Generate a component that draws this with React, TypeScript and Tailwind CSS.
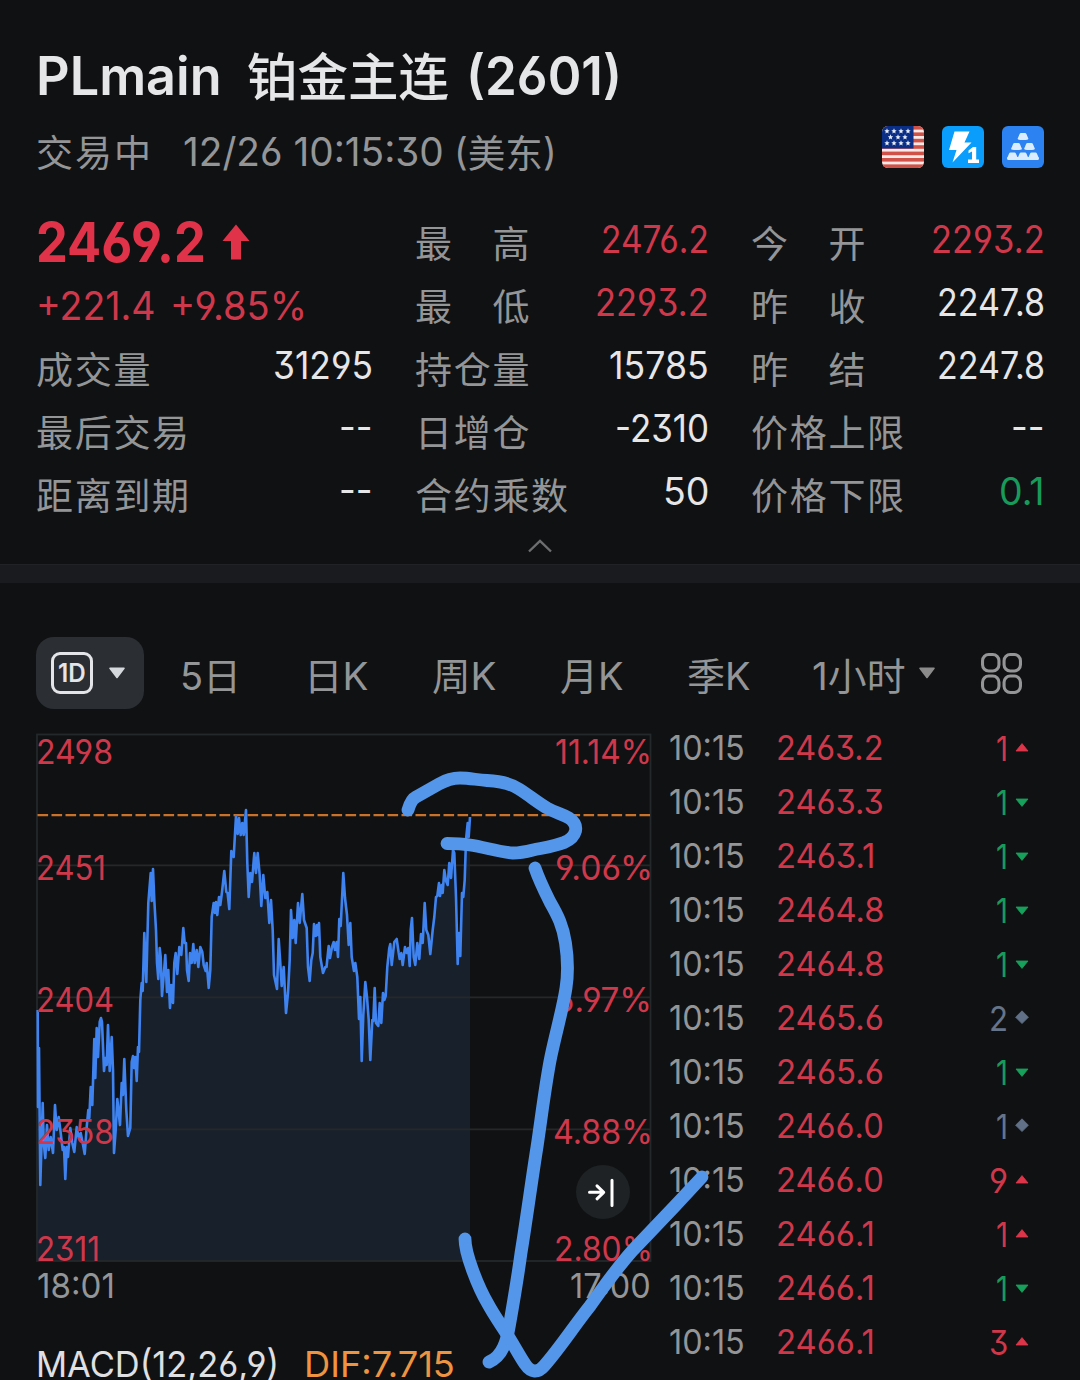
import { useLayoutEffect, useRef, useState } from 'react';
import type { ReactNode } from 'react';

// Condenses or widens a single line of text so that it fills `w` pixels
function Fit({ w, className = '', children }: { w: number; className?: string; children: ReactNode }) {
  const ref = useRef<HTMLSpanElement>(null);
  const [scale, setScale] = useState(1);

  useLayoutEffect(() => {
    if (ref.current) setScale(w / ref.current.offsetWidth);
  }, [w, children]);

  return (
    <span className={`block shrink-0 whitespace-pre ${className}`} style={{ width: w }}>
      <span ref={ref} className="inline-block origin-left" style={{ transform: `scaleX(${scale})` }}>
        {children}
      </span>
    </span>
  );
}

const tones = {
  red: 'text-[#cf384b]',
  green: 'text-[#189a5b]',
  white: 'text-[#e6e6e8]',
};
type Tone = keyof typeof tones;

type Stat = { label: string; value: string; w: number; tone: Tone };

const firstColumn: Stat[] = [
  { label: '成交量', value: '31295', w: 100, tone: 'white' },
  { label: '最后交易', value: '--', w: 34, tone: 'white' },
  { label: '距离到期', value: '--', w: 34, tone: 'white' },
];

const secondColumn: Stat[] = [
  { label: '最\u3000高', value: '2476.2', w: 108, tone: 'red' },
  { label: '最\u3000低', value: '2293.2', w: 114, tone: 'red' },
  { label: '持仓量', value: '15785', w: 100, tone: 'white' },
  { label: '日增仓', value: '-2310', w: 94, tone: 'white' },
  { label: '合约乘数', value: '50', w: 46, tone: 'white' },
];

const thirdColumn: Stat[] = [
  { label: '今\u3000开', value: '2293.2', w: 114, tone: 'red' },
  { label: '昨\u3000收', value: '2247.8', w: 108, tone: 'white' },
  { label: '昨\u3000结', value: '2247.8', w: 108, tone: 'white' },
  { label: '价格上限', value: '--', w: 34, tone: 'white' },
  { label: '价格下限', value: '0.1', w: 46, tone: 'green' },
];

const trades: { price: string; w: number; volume: string; dir: 'up' | 'down' | 'flat' }[] = [
  { price: '2463.2', w: 107, volume: '1', dir: 'up' },
  { price: '2463.3', w: 108, volume: '1', dir: 'down' },
  { price: '2463.1', w: 99, volume: '1', dir: 'down' },
  { price: '2464.8', w: 108, volume: '1', dir: 'down' },
  { price: '2464.8', w: 108, volume: '1', dir: 'down' },
  { price: '2465.6', w: 108, volume: '2', dir: 'flat' },
  { price: '2465.6', w: 108, volume: '1', dir: 'down' },
  { price: '2466.0', w: 108, volume: '1', dir: 'flat' },
  { price: '2466.0', w: 108, volume: '9', dir: 'up' },
  { price: '2466.1', w: 99, volume: '1', dir: 'up' },
  { price: '2466.1', w: 99, volume: '1', dir: 'down' },
  { price: '2466.1', w: 99, volume: '3', dir: 'up' },
];

const pricePoints =
  '37.7,1010 38,1107 39,1048 40.3,1185 42.7,1103 43.7,1143 45.3,1158 47,1125 48.7,1150 50.7,1137 53,1153 55,1105 56.7,1130 58.7,1117 60.7,1133 62.7,1150 64,1147 65.3,1179 66.7,1147 68,1157 70.3,1128 72.3,1143 74.3,1152 76.7,1127 78.7,1138 80.7,1133 82.7,1143 84.7,1154 86.7,1127 88.3,1110 89.3,1118 90.7,1087 92.3,1105 94.3,1039 95.3,1078 96.7,1028 98,1057 99.7,1022 101,1018 102,1022 104,1071 105.3,1058 106.7,1065 108,1025 109.7,1071 111.7,1037 113,1070 114,1153 115.7,1130 117.3,1099 120,1125 121.7,1083 123,1095 124.3,1059 126.3,1110 128,1136 130.3,1128 131.7,1062 133,1056 134,1068 135.3,1057 136.7,1081 138,1047 139,1052 140.3,1000 141.7,983 142.7,991 144.3,933 146.3,982 148.3,903 150.7,873 151.7,901 153,869 154.3,900 156,930 157,963 158.3,979 159.7,948 160.7,957 162,996 163.7,975 165.3,955 167,992 168.3,970 170,1008 171.3,985 173,1003 174.3,963 175.7,953 177.3,974 179.3,947 181.3,955 183.3,928 184.7,943 186,943 187,970 188.7,981 190,953 191.7,963 193.3,944 194.7,963 196.7,950 198.3,967 200.3,947 202.3,952 203.7,965 205.7,971 206.7,963 208.7,988 210.3,970 211.7,917 213.7,903 215,913 216,902 217.3,915 219,897 220.3,905 222,892 224.3,871 226.3,892 227.6,893 229.3,909 231.3,851 233.7,857 236,816 237.7,834 239,818 240.7,835 242.3,823 243.7,835 246,810 247.3,863 248.7,897 250.3,873 252,882 254.3,853 256,873 257.7,853 259.7,875 261.3,906 263.3,875 265.3,898 267.3,892 269.3,923 271,900 272.7,930 274,975 277,989 278.7,939 280.3,963 281.7,986 283.7,967 286,1013 288,993 289.7,960 291,910 292.7,938 294.3,920 295.7,943 298,903 299.7,923 302.3,894 304,920 306.7,928 308,967 309.7,981 311.3,960 312.7,953 314,924 315.7,936 317,925 318,935 319,923 320.3,957 323,973 325.3,967 326.5,967 328.7,946 330,958 332,947 333.7,942 335,950 336.7,942 338,957 339.3,919 340.7,926 343.3,873 345,898 347,915 348.7,945 350.3,923 351.7,957 354,971 355.3,963 357.3,977 359,1019 360.3,997 361.7,1061 363.3,1015 365.3,982 367,997 368.7,1020 370.3,1060 372.3,1020 373.3,1021 374.7,988 376,1023 378.3,1026 379.7,1003 381.3,1023 383,993 384.3,1000 385.7,996 387.3,967 389.3,948 390.3,944 391.7,965 394.3,942 396.7,939 398.7,953 399.7,959 401.3,953 402.7,965 405,947 406.7,953 408.3,948 409.7,966 410.7,930 412,918 413.7,957 415.3,965 417.3,943 419.3,959 421,934 422.7,943 424.7,903 426.3,930 428.3,935 430.3,954 432.7,930 434.3,917 436,897 437.3,896 439,883 440,896 441.7,885 442.7,893 444.3,870 446,881 447.7,885 449.3,863 451,878 453,850 454.3,853 456,897 457.7,964 459,933 460.3,956 462,893 463.3,897 464.7,880 466,840 467.7,823 468.7,837 470,817';

const priceLabels = [
  { text: '2498', y: 764, w: 77 },
  { text: '2451', y: 880, w: 70 },
  { text: '2404', y: 1012, w: 78 },
  { text: '2358', y: 1144, w: 78 },
  { text: '2311', y: 1261, w: 64 },
];

const percentLabels = [
  { text: '11.14%', x: 555, y: 764, w: 97 },
  { text: '9.06%', x: 555, y: 880, w: 98 },
  { text: '6.97%', x: 555, y: 1012, w: 97 },
  { text: '4.88%', x: 553, y: 1144, w: 100 },
  { text: '2.80%', x: 554, y: 1261, w: 99 },
];

function StatRow({ label, value, w, tone }: Stat) {
  return (
    <div className="flex h-[63px] items-center justify-between">
      <span className="pt-2.5 text-[37px] tracking-[1.7px] whitespace-pre text-[#949597]">{label}</span>
      <Fit w={w} className={`-mr-px text-[37.5px] ${tones[tone]}`}>{value}</Fit>
    </div>
  );
}

function FlagIcon() {
  const stars = [
    [5, 5], [12, 5], [19, 5], [26, 5],
    [8.5, 11], [16, 11], [23, 11],
    [5, 17], [12, 17], [19, 17], [26, 17],
  ];
  return (
    <svg className="size-[42px] rounded-md" viewBox="0 0 42 42">
      <rect width="42" height="42" fill="#f8e9e7" />
      {[0, 6.4, 12.8, 19.2, 25.6, 32, 38.4].map((y) => (
        <rect key={y} y={y} width="42" height="3.6" fill="#cf5148" />
      ))}
      <rect width="31.5" height="22.5" fill="#0b2f86" />
      {stars.map(([x, y]) => (
        <path
          key={`${x}-${y}`}
          transform={`translate(${x} ${y}) scale(1.15)`}
          d="M0-2.3 .7-.7 2.3-.6 1 .6 1.5 2.1 0 1.3-1.5 2.1-1 .6-2.3-.6-.7-.7Z"
          fill="#e8eefb"
        />
      ))}
    </svg>
  );
}

function LightningIcon() {
  return (
    <svg className="size-[42px] rounded-md" viewBox="0 0 42 42">
      <rect width="42" height="42" fill="#0a9dfb" />
      <path d="M12.500 5.500h15L22.500 16.500h7L10.500 36.500 14.500 24H7Z" fill="#fff" />
      <path d="M26.500 24.500 31 21h3.200v12.500H37V37H26v-3.500h4V25.500l-3.500 1.800Z" fill="#fff" />
    </svg>
  );
}

function IngotsIcon() {
  const ingots = [[21, 7], [14.5, 17], [27.5, 17], [10.5, 26.5], [21, 26.5], [31.5, 26.5]];
  return (
    <svg className="size-[42px] rounded-md" viewBox="0 0 42 42">
      <rect width="42" height="42" fill="#2b82f0" />
      {ingots.map(([x, y]) => (
        <path
          key={`${x}-${y}`}
          transform={`translate(${x} ${y})`}
          d="M-2 0H2Q3 0 3.400 1L5.400 5.800Q5.600 7 0 7Q-5.600 7-5.400 5.800L-3.400 1Q-3 0-2 0Z"
          fill="#dcecff"
        />
      ))}
      <rect x="5.2" y="31" width="31.6" height="3" rx="1" fill="#dcecff" />
    </svg>
  );
}

function Caret({ className }: { className: string }) {
  return (
    <svg className={`h-3 w-[18px] ${className}`} viewBox="0 0 18 12">
      <path d="M2 1.3h14L9 10.5Z" fill="currentColor" stroke="currentColor" strokeWidth="1.6" strokeLinejoin="round" />
    </svg>
  );
}

function TradeMark({ dir }: { dir: 'up' | 'down' | 'flat' }) {
  return (
    <svg className="size-4" viewBox="0 0 16 16">
      {dir === 'up' && <path d="M8 3.600 14 11H2Z" fill="#dc3549" stroke="#dc3549" strokeWidth=".8" strokeLinejoin="round" />}
      {dir === 'down' && <path d="M8 12.400 2 5H14Z" fill="#16a05c" stroke="#16a05c" strokeWidth=".8" strokeLinejoin="round" />}
      {dir === 'flat' && <path d="M8 .8 14.400 7.200 8 13.600 1.600 7.200Z" fill="#617086" stroke="#617086" strokeWidth=".8" strokeLinejoin="round" />}
    </svg>
  );
}

function PriceChart() {
  return (
    <svg className="block h-[530px] w-[616px] overflow-visible" viewBox="36 733 616 530">
      <polygon points={`37.5,1261 ${pricePoints} 470,1261`} fill="#18202b" />
      <g stroke="#25282b" strokeWidth="1.8" fill="none">
        <rect x="37" y="734.5" width="613.5" height="526.5" />
        <path d="M37 865.3H650M37 997.3H650M37 1129.3H650" />
      </g>
      <path d="M37.5 815.2H650" stroke="#c8722c" strokeWidth="2.2" strokeDasharray="10.6 3.4" />
      <polyline points={pricePoints} fill="none" stroke="#3e83f0" strokeWidth="2.6" strokeLinejoin="round" />
      <g fill="#cf384b" fontSize="33.5">
        {priceLabels.map((l) => (
          <text key={l.text} x="36" y={l.y} textLength={l.w} lengthAdjust="spacingAndGlyphs">{l.text}</text>
        ))}
        {percentLabels.map((l) => (
          <text key={l.text} x={l.x} y={l.y} textLength={l.w} lengthAdjust="spacingAndGlyphs">{l.text}</text>
        ))}
      </g>
      <circle cx="603" cy="1192" r="27" fill="#1e2224" />
      <path
        d="M589.5 1192.3H603M597 1185.8 603.7 1192.3 597 1198.8M612 1180.2V1205.5"
        fill="none" stroke="#fff" strokeWidth="3" strokeLinecap="round" strokeLinejoin="round"
      />
    </svg>
  );
}

export default function App() {
  return (
    <main className="relative flex h-[1380px] w-[1080px] flex-col overflow-hidden bg-[#101113] font-['Inter','Noto_Sans_CJK_SC',sans-serif] leading-none [font-feature-settings:'cv03','cv04','cv09','case']">
      <header className="shrink-0 px-9 pt-[43px]">
        <h1 className="flex h-[66px] items-center text-[53px] font-semibold text-[#e5e6e8]">
          <Fit w={186}>PLmain</Fit>
          <Fit w={202} className="ml-[25px] pt-0.5 text-[51px] font-medium">铂金主连</Fit>
          <Fit w={156} className="ml-[17px]">(2601)</Fit>
        </h1>
        <div className="mt-px flex h-[74px] items-center text-[#949597]">
          <div className="flex items-center pt-3">
            <Fit w={117} className="text-[37px] tracking-[2px]">交易中</Fit>
            <Fit w={261} className="ml-[30px] text-[39.5px]">12/26 10:15:30</Fit>
            <Fit w={103} className="ml-[10px] text-[38px]">(美东)</Fit>
          </div>
          <div className="ml-auto flex gap-[18px]">
            <FlagIcon />
            <LightningIcon />
            <IngotsIcon />
          </div>
        </div>
      </header>

      <section className="mt-6 flex shrink-0 gap-[43px] px-9">
        <div className="w-[336px]">
          <div className="flex h-[63px] items-center pt-[5px]">
            <Fit w={170} className="text-[55px] font-bold text-[#e03248]">2469.2</Fit>
            <svg className="ml-[16px] h-[36px] w-[28px]" viewBox="0 0 28 36">
              <path d="M14 .5 27.5 17H19V35.5H9V17H.5Z" fill="#e03248" />
            </svg>
          </div>
          <div className="flex h-[63px] items-center gap-[14px] pt-1.5 text-[40px] text-[#cf384b]">
            <Fit w={120}>+221.4</Fit>
            <Fit w={137}>+9.85%</Fit>
          </div>
          {firstColumn.map((s) => <StatRow key={s.label} {...s} />)}
        </div>
        <div className="w-[293px]">
          {secondColumn.map((s) => <StatRow key={s.label} {...s} />)}
        </div>
        <div className="w-[293px]">
          {thirdColumn.map((s) => <StatRow key={s.label} {...s} />)}
        </div>
      </section>

      <div className="flex h-[41px] shrink-0 items-center justify-center pt-[5px]">
        <svg className="h-[14px] w-[26px]" viewBox="0 0 26 14">
          <path d="M2 12.5 13 2 24 12.5" fill="none" stroke="#6d6e70" strokeWidth="2.4" />
        </svg>
      </div>
      <div className="h-[19px] shrink-0 border-t border-[#202225] bg-[#191b1e]" />

      {/* Period tabs */}
      <nav className="mt-[54px] flex h-[72px] shrink-0 items-center pl-9 text-[38px] text-[#949597]">
        <div className="flex h-[72px] w-[108px] items-center rounded-[18px] bg-[#2b2e33] pl-[15px]">
          <div className="flex size-[42px] items-center justify-center rounded-[9px] border-3 border-[#e3e5e8] text-[25px] font-semibold text-[#e3e5e8]">
            <Fit w={28}>1D</Fit>
          </div>
          <Caret className="ml-[15px] text-[#d5d9de]" />
        </div>
        <Fit w={61} className="ml-[36px] pt-1.5">5日</Fit>
        <Fit w={65} className="ml-[63px] pt-1.5">日K</Fit>
        <Fit w={65} className="ml-[63px] pt-1.5">周K</Fit>
        <Fit w={64} className="ml-[63px] pt-1.5">月K</Fit>
        <Fit w={64} className="ml-[63px] pt-1.5">季K</Fit>
        <Fit w={93} className="ml-[61px] pt-1.5">1小时</Fit>
        <Caret className="ml-[13px] text-[#8b8b8c]" />
        <svg className="ml-[45px] size-[41px]" viewBox="0 0 40 40" fill="none" stroke="#949597" strokeWidth="3">
          <rect x="1.5" y="1.5" width="16" height="16" rx="6" />
          <rect x="22.5" y="1.5" width="16" height="16" rx="6" />
          <rect x="1.5" y="22.5" width="16" height="16" rx="6" />
          <rect x="22.5" y="22.5" width="16" height="16" rx="6" />
        </svg>
      </nav>

      <section className="mt-3 flex shrink-0 pl-9">
        <div className="w-[616px] pt-3">
          <PriceChart />
          <div className="flex h-[45px] items-center justify-between px-px text-[34px] text-[#949597]">
            <Fit w={78}>18:01</Fit>
            <Fit w={81}>17:00</Fit>
          </div>
          <div className="mt-[36px] flex h-[40px] items-center gap-[25px] text-[36px]">
            <Fit w={243} className="text-[#e0e0e2]">MACD(12,26,9)</Fit>
            <Fit w={151} className="text-[#ee9340]">DIF:7.715</Fit>
          </div>
        </div>
        <div className="ml-[17px] flex w-[361px] flex-col text-[34.5px]">
          {trades.map((t, i) => (
            <div key={i} className="flex h-[54px] items-center">
              <Fit w={76} className="text-[#949597]">10:15</Fit>
              <Fit w={t.w} className="ml-[31px] text-[#cf384b]">{t.price}</Fit>
              <div
                className={`ml-auto flex items-center gap-[6px] ${
                  t.dir === 'up' ? 'text-[#cf384b]' : t.dir === 'down' ? 'text-[#189a5b]' : 'text-[#66748a]'
                }`}
              >
                <Fit w={t.volume === '1' ? 12 : 19} className="pt-[2px]">{t.volume}</Fit>
                <TradeMark dir={t.dir} />
              </div>
            </div>
          ))}
        </div>
      </section>

      {/* Freehand marks over the chart */}
      <svg
        className="pointer-events-none absolute inset-0 h-[1380px] w-[1080px]"
        viewBox="0 0 1080 1380"
        fill="none"
        stroke="#5496ea"
        strokeWidth="12.8"
        strokeLinecap="round"
        strokeLinejoin="round"
      >
        <path d="M408 810C410 803 412 799 416 797L439 784C446 780 453 778 460 778C470 778 477 780 487 780.5C500 781 510 783 519 789C530 796 537 802 547 808C556 813 562 814 569 818C575 822 576.5 826 575.5 831C574 837 570 840 564 842.5C555 846 545 847.5 533 850C525 852 520 853 513 853C499 852 484 847 470 845C460 843.5 454 843.5 447 843.5" />
        <path d="M535 868C539 880 544 890 550 902C558 916 563 926 565.5 943C567.5 956 568 975 566 988C563 1008 556 1032 551 1056C546 1080 542 1113 537 1147C532 1178 526 1223 521 1253C518 1275 513 1305 509.5 1325C507 1340 503 1356 489 1362" />
        <path d="M465 1239C465 1254 478 1287 488 1304C495 1317 502 1326 508 1336C515 1347 520 1357 525 1364C531 1373 538 1373 544 1366C560 1348 574 1326 590 1306C600 1292 615 1270 633 1250L674 1207L702 1177" />
      </svg>
    </main>
  );
}
